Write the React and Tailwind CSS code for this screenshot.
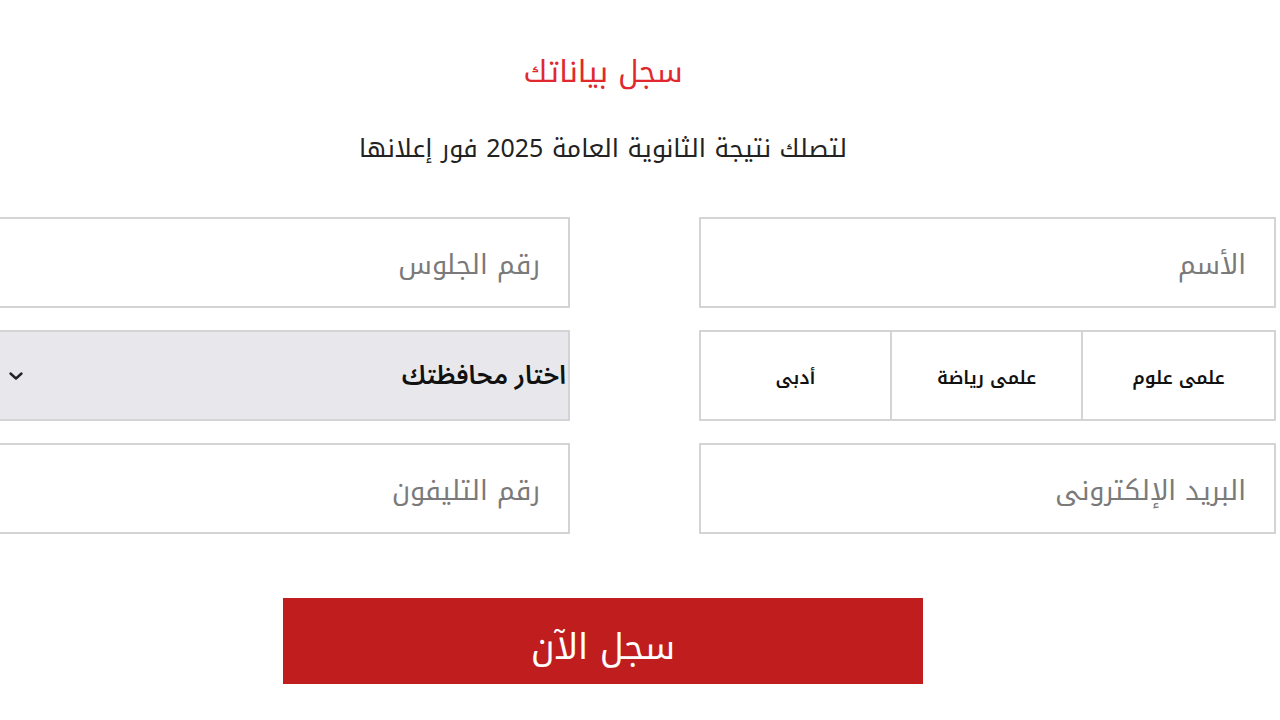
import React from "react";

function Field({ placeholder }) {
  return (
    <div className="h-[91px] border-2 border-[#d4d4d4] bg-white flex items-center pr-[28px] pt-[5px]">
      <span className="text-[27px] text-[#7a7a7a]">{placeholder}</span>
    </div>
  );
}

export default function App() {
  return (
    <div className="min-h-screen bg-white overflow-hidden font-['Noto_Kufi_Arabic','DejaVu_Sans',sans-serif]" dir="ltr">
      <div className="w-[1206px] text-center pt-[47px]" dir="rtl">
        <h2 className="text-[30px] leading-[50px] text-[#e0282e]">سجل بياناتك</h2>
        <p className="mt-[32px] text-[25px] leading-[40px] text-[#222]">لتصلك نتيجة الثانوية العامة 2025 فور إعلانها</p>
      </div>

      <div dir="rtl" className="-ml-[8px] mt-[48px] w-[1284px] grid grid-cols-[577px_578px] gap-x-[129px] gap-y-[22px]">
        <Field placeholder="الأسم" />
        <Field placeholder="رقم الجلوس" />

        <div className="h-[91px] grid grid-cols-3 border-2 border-[#d4d4d4] bg-white">
          <div className="flex items-center justify-center pt-[5px] text-[18px] font-semibold text-[#111]">علمى علوم</div>
          <div className="flex items-center justify-center pt-[5px] text-[18px] font-semibold text-[#111] border-r-2 border-[#d4d4d4]">علمى رياضة</div>
          <div className="flex items-center justify-center pt-[5px] text-[18px] font-semibold text-[#111] border-r-2 border-[#d4d4d4]">أدبى</div>
        </div>

        <div className="h-[91px] border-2 border-[#d4d4d4] bg-[#e8e8ec] flex items-center justify-between pr-[2px] pl-[14px]">
          <span className="text-[26px] font-semibold text-[#111] font-['Noto_Sans_Arabic',sans-serif]">اختار محافظتك</span>
          <svg width="16" height="12" viewBox="0 0 16 12" fill="none">
            <path d="M2.5 3.5 L8 8.5 L13.5 3.5" stroke="#222" strokeWidth="2.4" strokeLinecap="round" strokeLinejoin="round" />
          </svg>
        </div>

        <Field placeholder="البريد الإلكترونى" />
        <Field placeholder="رقم التليفون" />
      </div>

      <button
        dir="rtl"
        className="block ml-[283px] mt-[64px] w-[640px] h-[86px] pt-[12px] bg-[#c01e1e] text-white text-[35px] leading-none"
      >
        سجل الآن
      </button>
    </div>
  );
}
